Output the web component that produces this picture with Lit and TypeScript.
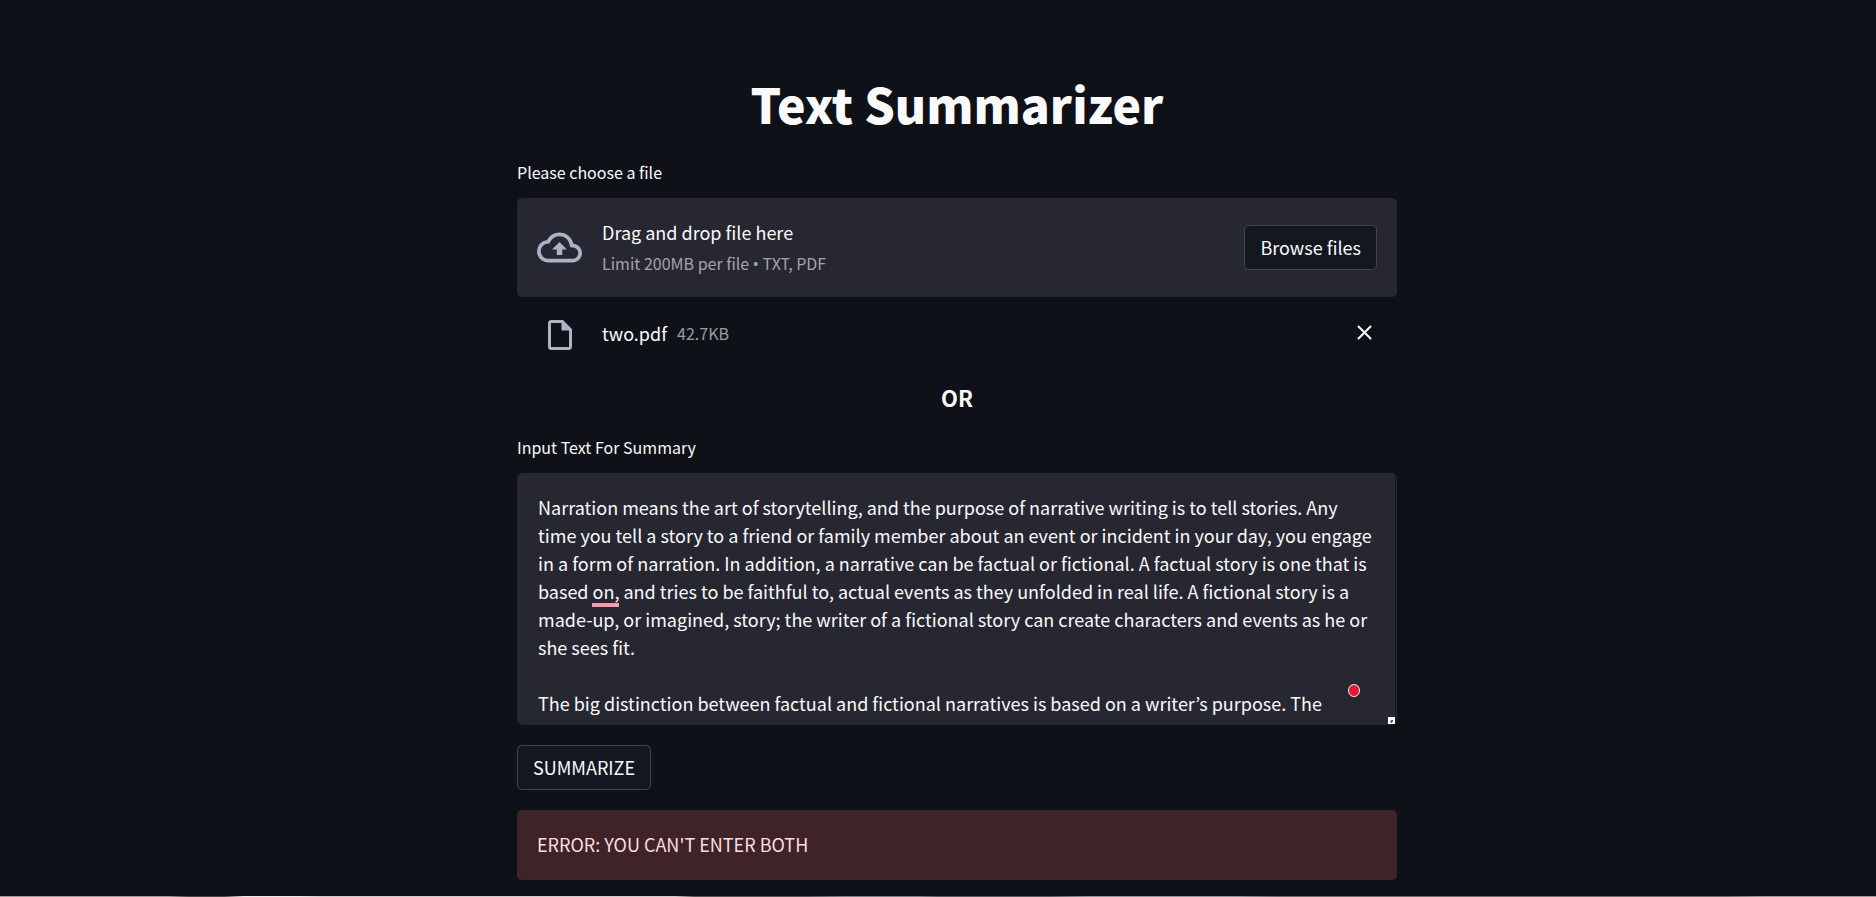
import { LitElement, html, css } from "lit";
import { customElement } from "lit/decorators.js";

const STORY = `Narration means the art of storytelling, and the purpose of narrative writing is to tell stories. Any time you tell a story to a friend or family member about an event or incident in your day, you engage in a form of narration. In addition, a narrative can be factual or fictional. A factual story is one that is based on, and tries to be faithful to, actual events as they unfolded in real life. A fictional story is a made-up, or imagined, story; the writer of a fictional story can create characters and events as he or she sees fit.

The big distinction between factual and fictional narratives is based on a writer’s purpose. The`;

@customElement("app-root")
export class AppRoot extends LitElement {
  static styles = css`
    :host {
      display: block;
      box-sizing: border-box;
      min-height: 100vh;
      padding: 70px 0 17px 38px;
      background:
        linear-gradient(
            90deg,
            #999 0 9%,
            #484848 10% 12%,
            #e8e8e8 13% 16%,
            #ccc 17% 36%,
            #555 37% 43%,
            #778084 45% 49%,
            #555c60 50% 56%,
            #8a9499 58% 66%,
            #6a6a6a 68% 92%,
            #999 94% 100%
          )
          bottom / 100% 1px no-repeat,
        #0e1117;
      color: #fafafa;
      font-family: "Noto Sans CJK KR", "Noto Sans", sans-serif;
      font-size: 18px;
      line-height: 28px;
    }
    * {
      box-sizing: border-box;
    }
    main {
      max-width: 880px;
      margin: 0 auto;
    }
    h1 {
      margin: 0 0 22px;
      font-size: 48px;
      line-height: 67px;
      font-weight: 900;
      text-align: center;
    }
    h2 {
      margin: 0 0 22px;
      font-size: 22px;
      line-height: 30px;
      font-weight: 700;
      text-align: center;
    }
    .label {
      display: block;
      margin-bottom: 13px;
      font-size: 16px;
      line-height: 26px;
    }
    .dropzone {
      display: flex;
      align-items: center;
      padding: 20px;
      border-radius: 5px;
      background: #262730;
    }
    .cloud {
      width: 45px;
      height: 45px;
      margin-right: 20px;
      fill: #acb1c6;
    }
    .hint {
      display: grid;
      flex: 1;
      gap: 3px;
    }
    .hint p {
      margin: 0;
    }
    .small {
      color: rgba(250, 250, 250, 0.6);
      font-size: 16px;
    }
    .bullet {
      font-family: "Noto Sans", sans-serif;
      line-height: 1;
    }
    .button {
      height: 45px;
      padding: 0 15px 2px;
      border: 1px solid rgba(250, 250, 250, 0.2);
      border-radius: 5px;
      background: #131720;
      color: inherit;
      font: inherit;
    }
    .file {
      display: flex;
      align-items: flex-start;
      margin: 20px 20px 29px;
      line-height: 32px;
    }
    .doc {
      width: 36px;
      height: 36px;
      margin: 0 24px 0 5px;
      fill: #acb1c6;
    }
    .size {
      flex: 1;
      margin-left: 10px;
    }
    .close {
      display: flex;
      align-items: center;
      height: 30px;
      padding: 0 5px;
      border: 0;
      background: none;
    }
    .close svg {
      width: 15px;
      height: 15px;
      stroke: #fafafa;
      stroke-width: 2;
      stroke-linecap: round;
    }
    .editor {
      position: relative;
      display: flex;
      margin-bottom: 20px;
    }
    textarea {
      flex: 1;
      height: 252px;
      padding: 19px 20px;
      border: 1px solid #262730;
      border-radius: 5px;
      background: #262730;
      color: inherit;
      font: inherit;
      resize: none;
      scrollbar-width: none;
      outline: none;
    }
    .underline {
      position: absolute;
      top: 130px;
      left: 75px;
      width: 27px;
      height: 4px;
      background: #ff98a8;
    }
    .status {
      position: absolute;
      right: 37px;
      bottom: 28px;
      width: 12px;
      height: 13px;
      border: 1px solid #f3e9ec;
      border-radius: 50%;
      background: #eb1536;
    }
    .edge {
      position: absolute;
      top: 3px;
      right: 1px;
      bottom: 1px;
      width: 1px;
      background: #12151c;
    }
    .grip {
      position: absolute;
      right: 2px;
      bottom: 1px;
      width: 7px;
      height: 7px;
    }
    .error {
      margin-top: 20px;
      padding: 20px 20px 22px;
      border-radius: 5px;
      background: #3e2328;
      color: #ffdede;
    }
  `;

  render() {
    return html`
      <main>
        <h1>Text Summarizer</h1>

        <label class="label" for="browse">Please choose a file</label>
        <section class="dropzone">
          <svg class="cloud" viewBox="0 0 24 24" aria-hidden="true">
            <path
              d="M19.35 10.04A7.49 7.49 0 0 0 12 4C9.11 4 6.6 5.64 5.35 8.04A5.994 5.994 0 0 0 0 14c0 3.31 2.69 6 6 6h13c2.76 0 5-2.24 5-5 0-2.64-2.05-4.78-4.65-4.96zM19 18H6c-2.21 0-4-1.79-4-4 0-2.05 1.53-3.76 3.56-3.97l1.07-.11.5-.95A5.469 5.469 0 0 1 12 6c2.62 0 4.88 1.86 5.39 4.43l.3 1.5 1.53.11A2.98 2.98 0 0 1 22 15c0 1.65-1.35 3-3 3zM8 13h2.55v3h2.9v-3H16l-4-4z"
            />
          </svg>
          <div class="hint">
            <p>Drag and drop file here</p>
            <p class="small">Limit 200MB per file <span class="bullet">•</span> TXT, PDF</p>
          </div>
          <button class="button" id="browse" type="button">Browse files</button>
        </section>

        <div class="file">
          <svg class="doc" viewBox="0 0 24 24" aria-hidden="true">
            <path
              d="M14 2H6c-1.1 0-2 .9-2 2v16c0 1.1.89 2 1.99 2H18c1.1 0 2-.9 2-2V8l-6-6zM6 20V4h7v5h5v11H6z"
            />
          </svg>
          <span>two.pdf</span>
          <span class="size small">42.7KB</span>
          <button class="close" type="button" aria-label="Remove two.pdf">
            <svg viewBox="0 0 15 15" aria-hidden="true">
              <path d="M1.5 1.5l12 12M13.5 1.5l-12 12" />
            </svg>
          </button>
        </div>

        <h2>OR</h2>

        <label class="label" for="story">Input Text For Summary</label>
        <div class="editor">
          <textarea id="story" spellcheck="false" .value=${STORY}></textarea>
          <span class="underline"></span>
          <span class="status"></span>
          <span class="edge"></span>
          <svg class="grip" viewBox="0 0 7 7" aria-hidden="true">
            <path fill="#fff" d="M0 0h7v7H0z" />
            <path fill="#555" d="M3 3h2v2H4v1H3V5H2V4h1z" />
          </svg>
        </div>

        <button class="button" type="button">SUMMARIZE</button>
        <div class="error" role="alert">ERROR: YOU CAN'T ENTER BOTH</div>
      </main>
    `;
  }
}
